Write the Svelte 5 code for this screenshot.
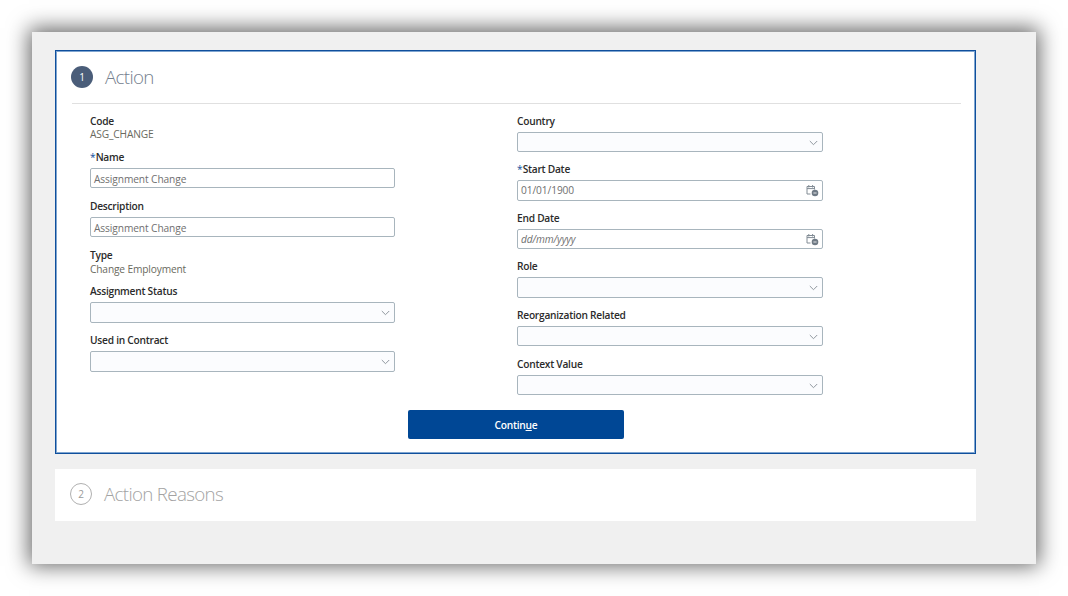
<script>
  const left = [
    { kind: 'text', label: 'Code', value: 'ASG_CHANGE' },
    { kind: 'input', label: 'Name', value: 'Assignment Change', required: true },
    { kind: 'input', label: 'Description', value: 'Assignment Change' },
    { kind: 'text', label: 'Type', value: 'Change Employment' },
    { kind: 'select', label: 'Assignment Status' },
    { kind: 'select', label: 'Used in Contract' }
  ];
  const right = [
    { kind: 'select', label: 'Country' },
    { kind: 'date', label: 'Start Date', value: '01/01/1900', required: true },
    { kind: 'date', label: 'End Date', placeholder: 'dd/mm/yyyy' },
    { kind: 'select', label: 'Role' },
    { kind: 'select', label: 'Reorganization Related' },
    { kind: 'select', label: 'Context Value' }
  ];
</script>

{#snippet field(f)}
  <div class="field {f.kind}">
    <div class="label">{#if f.required}<span class="req">*</span>{/if}{f.label}</div>
    {#if f.kind === 'text'}
      <div class="value">{f.value}</div>
    {:else}
      <div class="box">
        {#if f.value}<span class="val">{f.value}</span>{/if}
        {#if f.placeholder}<span class="ph">{f.placeholder}</span>{/if}
        {#if f.kind === 'select'}
          <svg class="chev" width="9" height="6" viewBox="0 0 9 6"><path d="M.8 1l3.7 3.7L8.2 1" fill="none" stroke="#8f979e" stroke-width="1"/></svg>
        {/if}
        {#if f.kind === 'date'}
          <svg class="cal" width="13" height="13" viewBox="0 0 13 13">
            <path d="M1 2.5h7.5v3M1 2.5v7.5h3.5M2.8 1v2.5M6.6 1v2.5M1 4.6h7.5" fill="none" stroke="#828c95" stroke-width="1"/>
            <circle cx="9" cy="9" r="3.3" fill="#6f7a85"/>
            <path d="M7.4 9h3.2" stroke="#fff" stroke-width=".8"/>
          </svg>
        {/if}
      </div>
    {/if}
  </div>
{/snippet}

<div class="page">
  <div class="window">
    <section class="panel active">
      <header class="head">
        <span class="num">1</span>
        <h2>Action</h2>
      </header>
      <div class="cols">
        <div class="col left">
          {#each left as f}{@render field(f)}{/each}
        </div>
        <div class="col right">
          {#each right as f}{@render field(f)}{/each}
        </div>
      </div>
      <div class="actions">
        <button type="button">Contin<u>u</u>e</button>
      </div>
    </section>
    <section class="panel idle">
      <span class="num off">2</span>
      <h2>Action Reasons</h2>
    </section>
  </div>
</div>

<style>
  :global(body) {
    margin: 0;
    background: #fff;
  }
  .page {
    width: 1068px;
    height: 596px;
    padding: 32px;
    box-sizing: border-box;
    overflow: hidden;
    font-family: "Open Sans", "Noto Sans", sans-serif;
  }
  .window {
    width: 1004px;
    height: 532px;
    box-sizing: border-box;
    padding: 18px 60px 0 23px;
    background: #f0f0f0;
    box-shadow: 0 -1px 20px 3px rgba(0, 0, 0, 0.6);
  }
  .panel {
    background: #fff;
    box-sizing: border-box;
  }
  .active {
    height: 404px;
    border: 1px solid #0f4f9c;
    padding: 0 14px 0 16px;
    box-shadow: inset 0 0 0 1px #7fa5d0;
  }
  .head {
    display: flex;
    align-items: center;
    height: 52px;
    border-bottom: 1px solid #e0e0e0;
    gap: 12px;
  }
  .num {
    width: 22px;
    height: 22px;
    border-radius: 50%;
    background: #4a5d79;
    color: #fff;
    font-size: 10px;
    display: flex;
    align-items: center;
    justify-content: center;
    flex: none;
    margin-left: -1px;
  }
  h2 {
    margin: 0;
    font-weight: 300;
    font-size: 18.8px;
    letter-spacing: -0.7px;
    color: #75808e;
  }
  .cols {
    display: grid;
    grid-template-columns: 305px 305.6px;
    column-gap: 122px;
    padding: 9.6px 0 0 18px;
    height: 294px;
    box-sizing: border-box;
  }
  .col {
    display: flex;
    flex-direction: column;
  }
  .left .field {
    height: 49px;
  }
  .right .field {
    height: 48.6px;
  }
  .left .field.text {
    height: 36.35px;
  }
  .label {
    font-size: 10.2px;
    font-weight: 600;
    line-height: 15.6px;
    letter-spacing: -0.25px;
    color: #2b2b2b;
    height: 18px;
  }
  .req {
    color: #0f4f9c;
    font-weight: 400;
    letter-spacing: 0;
  }
  .value {
    font-size: 10.2px;
    line-height: 13px;
    margin-top: -3.3px;
    letter-spacing: -0.15px;
    color: #6a6a5e;
  }
  .box {
    position: relative;
    height: 20.5px;
    box-sizing: border-box;
    border: 1px solid #a8b5bd;
    border-radius: 2px;
    background: #fff;
    padding-left: 3px;
    display: flex;
    align-items: center;
    font-size: 10.2px;
    letter-spacing: -0.1px;
    color: #6f6f6f;
  }
  .input .box {
    padding-top: 1px;
  }
  .select .box {
    background: #fbfcfe;
  }
  .ph {
    font-style: italic;
  }
  .chev {
    position: absolute;
    right: 4px;
    top: 7px;
  }
  .cal {
    position: absolute;
    right: 3px;
    top: 3px;
  }
  .actions {
    display: flex;
    padding: 12px 0 0 336px;
  }
  button {
    width: 216px;
    height: 29px;
    border: none;
    border-radius: 2px;
    background: #004795;
    color: #fff;
    font-family: inherit;
    font-size: 10.2px;
    font-weight: 600;
    letter-spacing: -0.25px;
    padding: 0;
  }
  button u {
    text-decoration-thickness: 1px;
  }
  .idle {
    margin-top: 15px;
    height: 52px;
    display: flex;
    align-items: center;
    gap: 12px;
    padding: 0 0 2px 15px;
  }
  .num.off {
    background: #fff;
    color: #9a9a9a;
    border: 1px solid #b0b0b0;
    box-sizing: border-box;
    margin-left: 0;
  }
  .idle h2 {
    color: #a3a3a3;
  }
</style>
